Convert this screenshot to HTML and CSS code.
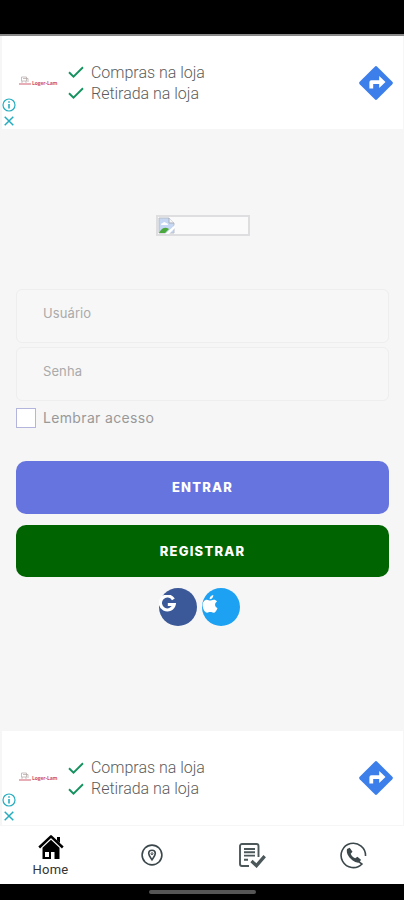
FILE: index.html
```
<!DOCTYPE html>
<html lang="pt-BR">
<head>
<meta charset="utf-8">
<title>Login</title>
<link rel="stylesheet" href="styles.css">
</head>
<body>
<svg class="defs" width="0" height="0">
  <symbol id="check" viewBox="0 0 16 12"><path d="M1 6.2 5.5 10.6 15 1.2" fill="none" stroke="#169260" stroke-width="1.9"/></symbol>
  <symbol id="info" viewBox="0 0 14 14"><circle cx="7" cy="7" r="6" fill="none" stroke="#25adbf" stroke-width="1.2"/><path d="M7 6v4.6M7 3.2v1.6" stroke="#25adbf" stroke-width="1.6"/></symbol>
  <symbol id="close" viewBox="0 0 10 10"><path d="M.7.7 9.3 9.3M9.3.7.7 9.3" stroke="#25adbf" stroke-width="1.5"/></symbol>
  <symbol id="route" viewBox="0 0 34 34"><path d="M15.8.7a1.7 1.7 0 0 1 2.4 0L33.3 15.8a1.7 1.7 0 0 1 0 2.4L18.2 33.3a1.7 1.7 0 0 1-2.4 0L.7 18.2a1.7 1.7 0 0 1 0-2.4Z" fill="#3c7fea"/><path d="M10.4 22.5v-6.3a2 2 0 0 1 2-2h7.8v-4.1l6.3 6-6.3 6v-4.2h-6v4.6Z" fill="#fff"/></symbol>
  <symbol id="brand" viewBox="0 0 14 10"><path d="M3.5 1h5v4h-5zM5 2.5h5V6M4 5v2M8 5v2" fill="none" stroke="#b3a3a3" stroke-width=".7"/><path d="M1 8h12" stroke="#d77888" stroke-width="1.2"/></symbol>
</svg>
<div class="status"></div>
<section class="ad">
  <div class="ad-brand"><svg width="14" height="10"><use href="#brand"/></svg><span>Loger-Lam</span></div>
  <ul class="ad-list">
    <li><svg width="16" height="12"><use href="#check"/></svg><span>Compras na loja</span></li>
    <li><svg width="16" height="12"><use href="#check"/></svg><span>Retirada na loja</span></li>
  </ul>
  <svg class="route" width="34" height="34"><use href="#route"/></svg>
  <div class="ad-choices"><svg width="14" height="14"><use href="#info"/></svg><svg width="10" height="10"><use href="#close"/></svg></div>
</section>
<main>
  <div class="image-box">
    <svg width="17" height="17" viewBox="0 0 17 17"><path d="M1 1h10l5 5v10H1Z" fill="#c6d7f3" stroke="#b9bec8"/><path d="M11 1v5h5" fill="#f5f5f5" stroke="#a9aeb8"/><path d="M3 8q0-2 2-2 1-2 3 0 2 0 2 2Z" fill="#fff"/><path d="M1 16q3-6 8-5l2 1-4 4Z" fill="#4aa83c"/><path d="m7 17 10-9v3l-6 6Z" fill="#fff"/></svg>
  </div>
  <form>
    <div class="field"><span>Usuário</span></div>
    <div class="field second"><span>Senha</span></div>
    <label class="remember"><i></i><span>Lembrar acesso</span></label>
    <button type="button" class="enter">ENTRAR</button>
    <button type="button" class="register">REGISTRAR</button>
  </form>
  <div class="social">
    <a class="google"><svg width="17" height="18" viewBox="0 0 17 18"><path d="M14.4 4.4A7 7 0 1 0 15.2 9.500H8.8" fill="none" stroke="#fff" stroke-width="3.200"/></svg></a>
    <a class="apple"><svg width="16" height="19" viewBox="0 0 16 19"><path d="M11.3 0c.2 2.4-1.6 4.3-3.7 4.3C7.4 2.2 9.2.3 11.3 0ZM8 5.6c1 0 2-.9 3.8-.9 1.3 0 2.5.7 3.2 1.7-2.8 1.7-2.4 5.4.5 6.5-.8 2.4-2.2 4.8-4 4.8-1.2 0-1.8-.7-3.2-.7s-2 .7-3.2.7C2.8 17.7.6 13.5.6 10.2c0-3.5 2.2-5.4 4.3-5.4 1.4 0 2.3.8 3.1.8Z" fill="#fff"/></svg></a>
  </div>
</main>
<section class="ad bottom">
  <div class="ad-brand"><svg width="14" height="10"><use href="#brand"/></svg><span>Loger-Lam</span></div>
  <ul class="ad-list">
    <li><svg width="16" height="12"><use href="#check"/></svg><span>Compras na loja</span></li>
    <li><svg width="16" height="12"><use href="#check"/></svg><span>Retirada na loja</span></li>
  </ul>
  <svg class="route" width="34" height="34"><use href="#route"/></svg>
  <div class="ad-choices"><svg width="14" height="14"><use href="#info"/></svg><svg width="10" height="10"><use href="#close"/></svg></div>
</section>
<nav>
  <a class="home"><svg width="26" height="26" viewBox="0 0 26 26"><path d="M1.2 13.5 13 2.4l11.800 11.100" fill="none" stroke="#000" stroke-width="2.500" stroke-linejoin="round"/><path d="M19 3h3v6l-3-2.600Z"/><path d="M4.500 13.800 13 5.800l8.500 8V25H4.500Z"/><path d="M7 18h4v5H7Z" fill="#fff"/><path d="M13 18h3.500v7H13Z" fill="#fff"/></svg><span>Home</span></a>
  <a><svg width="22" height="22" viewBox="0 0 22 22" fill="none" stroke="#3b474b" stroke-width="1.6"><circle cx="11" cy="11" r="9.900"/><path d="M11 15.800C9 13 7.700 11.500 7.700 9.600a3.300 3.300 0 0 1 6.600 0C14.300 11.500 13 13 11 15.800Z"/><circle cx="11" cy="9.700" r="1" stroke-width="1"/></svg></a>
  <a><svg width="27" height="26" viewBox="0 0 27 26" fill="none" stroke="#4b5759" stroke-width="1.900"><path d="M19.500 15V4a2 2 0 0 0-2-2H3a2 2 0 0 0-2 2v18a2 2 0 0 0 2 2h7M5 7h11M5 10.300h11M5 13.600h11M5 17.700h4"/><path d="m12.500 19 5 4.700 8.200-9.500" stroke-width="3.300"/></svg></a>
  <a><svg width="27" height="27" viewBox="0 0 27 27"><path d="M25.500 14A12.200 12.200 0 1 0 22 22l-3-2.200" fill="none" stroke="#3b474b" stroke-width="1.600"/><path d="m7 7 2.700-1.300 2.800 4-1.800 2c.8 2 2.400 3.500 4.500 4.500l2.200-1.500 3.600 3-1.400 2.600c-1 .8-3 .6-5.600-1C9.500 16.600 5.800 11.500 7 7Z" fill="#3b474b"/></svg></a>
</nav>
<footer><i></i></footer>
</body>
</html>
```
FILE: styles.css
```
* { box-sizing: border-box; }
body {
  margin: 0;
  width: 404px;
  height: 900px;
  overflow: hidden;
  display: flex;
  flex-direction: column;
  background: #f6f6f6;
  font-family: Roboto, sans-serif;
}
svg { display: block; flex: none; }
.defs { position: absolute; }
.status { height: 36px; background: #000; border-bottom: 2px solid #888; flex: none; }
.ad {
  position: relative;
  flex: none;
  height: 93px;
  margin: 0 1px 0 2px;
  padding: 0 10px 0 16px;
  display: flex;
  align-items: center;
  background: #fff;
}
.ad-brand { width: 50px; display: flex; align-items: center; margin-top: -3px; }
.ad-brand span { font: bold 5px "Open Sans", sans-serif; color: #cc5070; white-space: nowrap; margin-top: 3px; letter-spacing: -.1px; }
.ad-list { list-style: none; margin: 0; padding: 0; }
.ad-list li { height: 21px; display: flex; align-items: center; gap: 7px; white-space: nowrap; }
.ad-list span { font-size: 16px; font-weight: 300; line-height: 21px; color: #5c5c5c; letter-spacing: -.02px; }
.route { margin-left: auto; }
.ad-choices { position: absolute; left: 0; top: 62px; display: flex; flex-direction: column; align-items: center; gap: 4px; }
main { flex: 1; display: flex; flex-direction: column; align-items: center; padding-top: 86px; }
.image-box { width: 94px; height: 21px; border: 2px solid #dedee0; background: #fafafa; margin-left: 1px; flex: none; }
form { width: 373px; margin: 53px 0 0 1px; }
.field { height: 54px; padding: 14px 26px; border: 1px solid #eeeeee; border-radius: 6px; background: #f7f7f7; }
.field span { display: block; font: 13px/18px Inter, sans-serif; color: #aaa; letter-spacing: .1px; }
.second { margin-top: 4px; }
.remember { height: 20px; margin-top: 7px; display: flex; align-items: center; gap: 7px; font: 14px Inter, sans-serif; color: #999; letter-spacing: .34px; }
.remember span { margin-top: -2px; }
.remember i { width: 20px; height: 20px; border: 1px solid #b4b5dd; background: #fff; }
button { display: block; width: 373px; height: 53px; border: 0; border-radius: 10px; padding: 0 0 2px; color: #fff; font: 800 13px Inter, sans-serif; letter-spacing: 1.2px; }
.enter { margin-top: 33px; background: #6674df; }
.register { margin-top: 11px; background: #006400; height: 52px; padding-bottom: 1px; }
.social { display: flex; gap: 5px; margin-top: 11px; margin-left: -5px; }
.social a { width: 38px; height: 38px; border-radius: 50%; padding-top: 7px; }
.google { background: #3b5998; }
.apple { background: #1da1f2; }
.bottom { height: 94px; }
nav { flex: none; height: 58px; margin-top: 1px; background: #fff; display: grid; grid-template-columns: repeat(4, 1fr); }
nav a { display: flex; flex-direction: column; align-items: center; justify-content: center; }
.home span { font: 13px/15px Roboto, sans-serif; color: #333; letter-spacing: .2px; margin-top: 2px; }
footer { flex: none; height: 16px; background: #000; display: flex; align-items: center; justify-content: center; }
footer i { width: 107px; height: 4px; border-radius: 2px; background: #555; }
```
